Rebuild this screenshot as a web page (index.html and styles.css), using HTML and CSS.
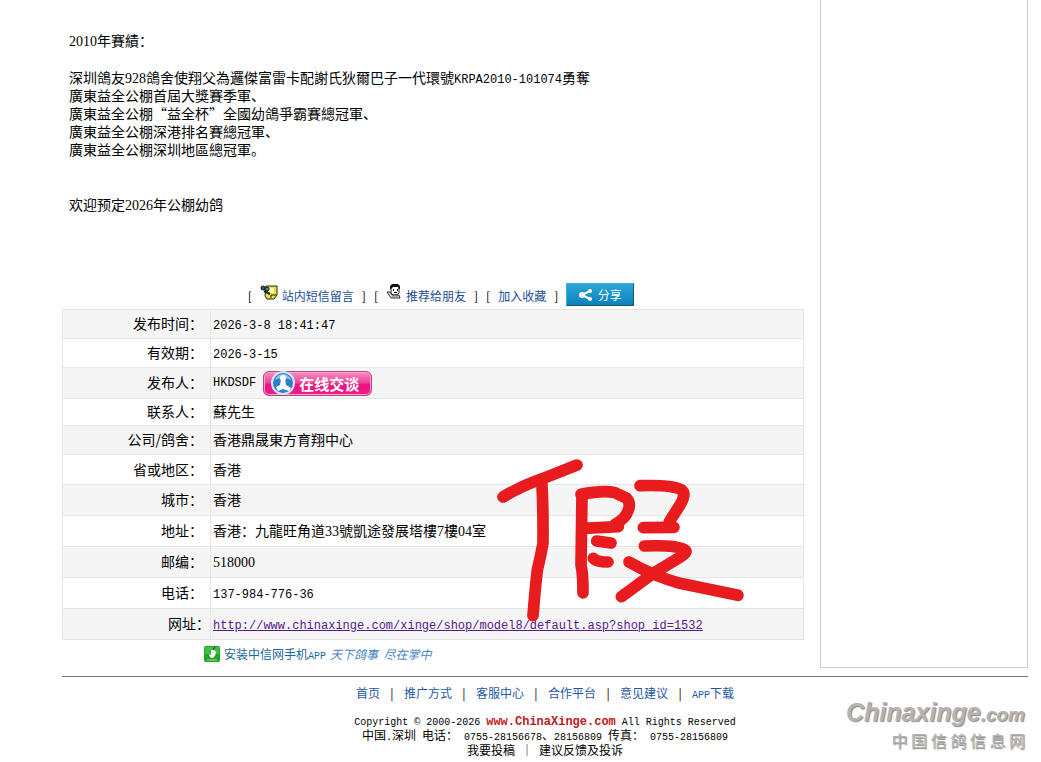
FILE: index.html
```html
<!DOCTYPE html>
<html lang="zh-CN">
<head>
<meta charset="utf-8" />
<meta name="viewport" content="width=device-width,initial-scale=1.0" />
<title>中国信鸽信息网</title>
<link rel="stylesheet" href="styles.css">
</head>
<body>
<div class="wrap">
	<div class="content">
		<div class="main">
			<div class="article">
				<p><span class="num">2010</span>年賽績：</p>
				<p>深圳鴿友<span class="num">928</span>鴿舍使翔父為邏傑富雷卡配謝氏狄爾巴子一代環號<span class="en">KRPA2010-101074</span>勇奪<br>
				廣東益全公棚首屆大獎賽季軍、<br>
				廣東益全公棚“益全杯”全國幼鴿爭霸賽總冠軍、<br>
				廣東益全公棚深港排名賽總冠軍、<br>
				廣東益全公棚深圳地區總冠軍。</p>
				<p class="last">欢迎预定<span class="num">2026</span>年公棚幼鸽</p>
			</div>
			<div class="tools">
				<span>[</span>
				<a href="#">
					<svg width="18" height="16" viewBox="0 0 18 16"><path d="M6 2h11v9l-3 4H7l-2-3z" fill="#e9e23c" stroke="#222"/><path d="M8 4h6v5H8z" fill="#fff9a0"/><path d="M11 14v-3h5" fill="none" stroke="#222"/><circle cx="3" cy="4" r="2" fill="#27666b" stroke="#112"/><circle cx="7" cy="5" r="2" fill="#48979a" stroke="#112"/><path d="M4 7l6 3" stroke="#222" stroke-width="2"/></svg>
					站内短信留言</a>
				<span>]</span>
				<span>[</span>
				<a href="#">
					<svg width="16" height="16" viewBox="0 0 16 16"><path d="M5 3q0-2 4-2t4 2v6l-2 2H7L5 9z" fill="#fff" stroke="#222"/><path d="M4 5V2l2-2h6l2 2v3h-1L12 3H7L5 5z" fill="#111"/><path d="M7 5h1v2H7zM11 5h1v2h-1zM8 8h3v1H8z" fill="#111"/><path d="M1 8h3l2 3h7l1 3H5z" fill="#d7dde2" stroke="#333"/><path d="M6 12h6" stroke="#777"/></svg>
					推荐给朋友</a>
				<span>]</span>
				<span>[</span>
				<a href="#">加入收藏</a>
				<span>]</span>
				<button type="button" class="share">
					<svg width="13" height="12" viewBox="0 0 13 12"><path d="M11 2L3 6l8 4" fill="none" stroke="#fff" stroke-width="2"/><circle cx="11" cy="2" r="2" fill="#fff"/><circle cx="3" cy="6" r="3" fill="#fff"/><circle cx="11" cy="10" r="2" fill="#fff"/></svg>
					分享</button>
			</div>
			<div class="info">
				<table>
					<tr><th>发布时间：</th><td><span class="en">2026-3-8 18:41:47</span></td></tr>
					<tr><th>有效期：</th><td><span class="en">2026-3-15</span></td></tr>
					<tr class="h31"><th>发布人：</th><td><div class="user"><span class="en">HKDSDF</span>
						<button type="button" class="chat">
							<svg width="24" height="24" viewBox="0 0 24 24"><circle cx="12" cy="12" r="11" fill="#2d7fc8" stroke="#d5e6f6" stroke-width="2"/><path d="M4 9q2-6 8-6t8 6q-8-4-16 0z" fill="#8fc2ec"/><circle cx="12" cy="7" r="3" fill="#fff"/><path d="M10 8h4l1 6 5 3-2 3-6-2-5 2-2-4 4-2z" fill="#fff"/></svg>
							在线交谈</button></div></td></tr>
					<tr class="h27"><th>联系人：</th><td>蘇先生</td></tr>
					<tr><th>公司/鸽舍：</th><td>香港鼎晟東方育翔中心</td></tr>
					<tr class="h30"><th>省或地区：</th><td>香港</td></tr>
					<tr class="h31"><th>城市：</th><td>香港</td></tr>
					<tr class="h31"><th>地址：</th><td>香港：九龍旺角道<span class="num">33</span>號凱途發展塔樓<span class="num">7</span>樓<span class="num">04</span>室</td></tr>
					<tr class="h31"><th>邮编：</th><td><span class="num">518000</span></td></tr>
					<tr class="h31"><th>电话：</th><td><span class="en">137-984-776-36</span></td></tr>
					<tr class="h31"><th class="url">网址：</th><td><a class="en" href="#">http://www.chinaxinge.com/xinge/shop/model8/default.asp?shop_id=1532</a></td></tr>
				</table>
				<svg class="mark" width="280" height="190" viewBox="0 0 840 570">
					<path d="M69 171Q120 140 190 115L291 75"/>
					<path d="M185 120Q190 200 189 310Q182 350 172 390Q165 450 159 527"/>
					<path d="M306 165L303 375Q309 400 309 459"/>
					<path d="M303 163Q370 150 405 158L440 175Q453 190 445 210Q438 235 405 253L415 260L310 265"/>
					<path d="M350 303L393 309"/>
					<path d="M340 355Q350 366 384 366"/>
					<path d="M480 137Q580 134 605 150Q620 162 600 195L568 245"/>
					<path d="M490 263L582 262"/>
					<path d="M493 318Q585 314 612 328Q628 335 600 352L520 400L424 470"/>
					<path d="M447 366Q520 408 600 430L774 466"/>
				</svg>
			</div>
			<div class="app">
				<svg width="16" height="16" viewBox="0 0 16 16"><rect width="16" height="16" rx="2" fill="#24a52a"/><rect x="1" y="1" width="14" height="7" rx="1" fill="#43bd3d"/><path d="M7 4q3-1 5 2-1 6-4 6-3-1-3-4l2 1z" fill="#fff"/><path d="M9 4l2-3" stroke="#123"/><path d="M3 14h10" stroke="#a4e29c"/></svg>
				<a href="#">安装中信网手机<span class="en">APP</span></a>
				<i>天下鸽事&nbsp; 尽在掌中</i>
			</div>
		</div>
		<div class="side"></div>
	</div>
	<div class="footer">
		<div class="nav">
			<a href="#">首页</a>
			<a href="#">推广方式</a>
			<a href="#">客服中心</a>
			<a href="#">合作平台</a>
			<a href="#">意见建议</a>
			<a href="#"><span class="en">APP</span>下载</a>
		</div>
		<div class="copy">
			<span class="en">Copyright © 2000-2026 <b>www.ChinaXinge.com</b> All Rights Reserved</span><br>
			中国<span class="en">.</span>深圳<span class="en"> </span>电话：<span class="en"> 0755-28156678</span>、<span class="en">28156809 </span>传真：<span class="en"> 0755-28156809</span><br>
			我要投稿<span class="en"> </span>｜<span class="en"> </span>建议反馈及投诉
		</div>
		<div class="logo">
			<div class="name">Chinaxinge<small>.com</small></div>
			<div class="cn">中 国 信 鸽 信 息 网</div>
		</div>
	</div>
</div>
</body>
</html>
```
FILE: styles.css
```css
body{
	margin:0;
	background:#fff;
	color:#000;
	font:14px/18px "Noto Sans CJK SC",sans-serif;
}
a{
	color:#1a4c98;
	text-decoration:none;
}
svg{
	display:block;
	flex:none;
}
button{
	display:flex;
	align-items:center;
	box-sizing:border-box;
	padding:0;
	color:#fff;
	font-family:inherit;
	cursor:pointer;
}
.en{
	font-family:"Liberation Mono",monospace;
	font-size:12px;
	line-height:1;
}
.num{
	font-family:"Liberation Serif",serif;
	line-height:1;
}
.wrap{
	padding:0 13px 0 62px;
}
.content{
	display:flex;
	gap:16px;
	padding-bottom:8px;
	border-bottom:1px solid #777;
}
.main{
	flex:1;
}
.side{
	box-sizing:border-box;
	width:208px;
	border:1px solid #ccc;
	border-top:0;
}
.article{
	padding:31px 7px 0;
	height:251px;
	box-sizing:border-box;
}
.article p{
	margin:0 0 19px;
}
.article .last{
	margin-top:37px;
}
.tools{
	display:flex;
	justify-content:center;
	align-items:center;
	gap:8px;
	padding:32px 0 3px 16px;
	font-size:12px;
	line-height:23px;
}
.tools a{
	display:flex;
	gap:4px;
}
.tools a,.tools span{
	padding-top:1px;
	margin-bottom:-1px;
}
.share{
	justify-content:center;
	gap:6px;
	width:68px;
	height:23px;
	border:1px solid #1d6d98;
	border-color:#43b0dc #14587c #14587c #43b0dc;
	background:linear-gradient(#2ba5d8,#0b82bc);
	font-size:12px;
}
.info{
	position:relative;
}
table{
	width:100%;
	border-collapse:collapse;
	border:1px solid #e6e6e6;
}
tr{
	height:29px;
	border-bottom:1px solid #e6e6e6;
}
tr:nth-child(odd){
	background:#f5f5f5;
}
.h27{ height:27px; }
.h30{ height:30px; }
.h31{ height:31px; }
th{
	width:140px;
	padding:0 7px 2px 0;
	font-weight:normal;
	text-align:right;
	border-right:1px solid #e6e6e6;
}
th.url{
	padding-right:0;
}
td{
	padding:0 2px 2px;
}
td a{
	color:#551a8b;
	text-decoration:underline;
}
.user{
	display:flex;
	align-items:center;
	gap:7px;
	margin-bottom:-2px;
}
.chat{
	gap:4px;
	width:109px;
	height:25px;
	padding-left:7px;
	border:1px solid #b8457c;
	border-radius:6px;
	box-shadow:inset 0 0 0 1px #f9a5cf;
	background:linear-gradient(#f58fc0,#f0479a 45%,#ee1184 55%,#f01e8b);
	font-size:15px;
	font-weight:bold;
}
/* hand written stamp over the table */
.mark{
	position:absolute;
	left:418px;
	top:131px;
	fill:none;
	stroke:#e81b1e;
	stroke-width:35;
	stroke-linecap:round;
	stroke-linejoin:round;
	pointer-events:none;
}
.app{
	display:flex;
	align-items:center;
	gap:4px;
	padding:5px 0 5px 142px;
	font-size:12px;
}
.app a{
	color:#1c6a9c;
}
.app i{
	color:#4a86c4;
}
.footer{
	position:relative;
	padding:7px 0 5px;
	font-size:12px;
	line-height:14px;
	text-align:center;
}
.app .en,.footer .en{
	font-size:10px;
}
.nav{
	display:flex;
	justify-content:center;
	line-height:18px;
}
.nav a{
	color:#1e58a4;
}
.nav a + a:before{
	content:"|";
	display:inline-block;
	width:24px;
	color:#000;
}
.copy{
	margin-top:11px;
}
.copy .en{
	white-space:pre;
}
.copy b{
	color:#c4161c;
	font-size:12px;
	line-height:1;
}
.logo{
	position:absolute;
	right:3px;
	top:20px;
	color:#b4b4b4;
	text-align:right;
	text-shadow:1px 1px 1px #888;
}
.name{
	font:italic bold 25px/30px "Liberation Sans",sans-serif;
}
.name small{
	font-size:19px;
}
.cn{
	font-size:16px;
	line-height:20px;
}
```
